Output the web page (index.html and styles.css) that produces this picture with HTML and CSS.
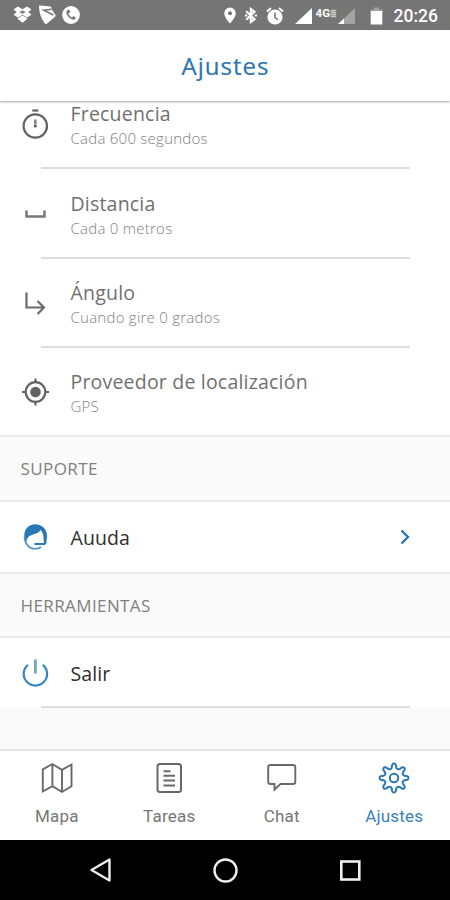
FILE: index.html
```html
<!DOCTYPE html>
<html lang="es">

<head>
    <meta charset="UTF-8">
    <meta name="viewport" content="width=device-width, initial-scale=1.0">
    <title>Ajustes</title>
    <link rel="stylesheet" href="styles.css">
</head>

<body>
    <div class="status-bar">
        <div class="status-left">
            <svg width="19" height="18" viewBox="0 0 19 18" fill="#fff">
                <path d="M5 .5l4.500 2.800L14 .5l4.500 3-3.200 2.600 3.200 2.700L14 11.500 9.500 8.700 5 11.500.5 8.800l3.200-2.700L.5 3.500z" />
                <path d="M9.500 4.200L6.400 6.100l3.100 1.900 3.100-1.900z" fill="#858585" />
                <path d="M4.300 12.600l5.200-3.200 5.200 3.200-5.200 4.200z" />
            </svg>
            <svg width="18" height="20" viewBox="0 0 18 20" fill="#fff">
                <path d="M1 1.500Q.8.500 2 .5L12.500 1.500Q14 2 13.500 4L17.500 10Q18 11.200 16.800 12L8.800 18.800Q7.500 19.600 6.500 18C3 13 1.200 8 1 1.500z" />
                <path d="M13.500 4.300L5.500 5.200l10 4.800" fill="none" stroke="#757575" stroke-width="1.400" />
            </svg>
            <svg width="18" height="18" viewBox="0 0 18 18">
                <circle cx="9" cy="9" r="8.900" fill="#fff" />
                <path d="M6.200 4.600c-1.600 1-1.300 3.300.6 5.500s4.500 3.500 6 2" fill="none" stroke="#757575" stroke-width="1.600" />
                <path d="M5.800 4.200l1.800 2.600M10.500 11l2.700 1.500" stroke="#757575" stroke-width="2.400" />
            </svg>
        </div>
        <div class="status-right">
            <svg class="pin" width="12" height="17" viewBox="0 0 12 17">
                <path d="M6 .5A5.700 5.700 0 0 0 .3 6.200C.3 10.500 6 16.500 6 16.500s5.700-6 5.700-10.300A5.700 5.700 0 0 0 6 .5z" fill="#fff" />
                <circle cx="6" cy="6.200" r="2" fill="#757575" />
            </svg>
            <svg class="bluetooth" width="12" height="17" viewBox="0 0 12 17" fill="none" stroke="#fff" stroke-width="2.100">
                <path d="M1.200 4.300l8.300 7.900L5.800 15V2l3.700 2.800-8.300 7.900M0 8.500h2.300M9.700 8.500H12" />
            </svg>
            <svg class="alarm" width="18" height="18" viewBox="0 0 18 18">
                <circle cx="9" cy="10" r="7.600" fill="#fff" />
                <path d="M1 4.500L5 1M17 4.500L13 1" stroke="#fff" stroke-width="2" />
                <path d="M9 5.500v5l3 2.200" fill="none" stroke="#757575" stroke-width="1.500" />
            </svg>
            <svg class="signal" width="17" height="16" viewBox="0 0 17 16">
                <path d="M0 16L17 0v16z" fill="#fff" />
            </svg>
            <span class="network">4G<span>≣</span></span>
            <svg class="signal-two" width="17" height="16" viewBox="0 0 17 16">
                <path d="M0 16L17 0v16z" fill="#a3a3a3" />
                <path d="M0 16l6-5.600V16z" fill="#fff" />
            </svg>
            <svg class="battery" width="13" height="18" viewBox="0 0 13 18">
                <path d="M4 .5h5v2h3.300v3H.7v-3H4z" fill="#a3a3a3" />
                <path d="M.7 4h11.600v13.500H.7z" fill="#fff" />
            </svg>
            <span class="clock">20:26</span>
        </div>
    </div>

    <header>
        <h1>Ajustes</h1>
    </header>

    <main>
        <div class="row first">
            <svg class="icon" width="30" height="32" viewBox="0 0 30 32" fill="none" stroke="#626262" stroke-width="2.200">
                <circle cx="15.300" cy="18" r="11.700" />
                <path d="M12.300 2.500h6" />
                <path d="M15.300 11.500v5" stroke="#888" stroke-width="2.600" />
                <circle cx="15.300" cy="18" r="1.600" fill="#626262" stroke="none" />
            </svg>
            <div class="text">
                <div class="title">Frecuencia</div>
                <div class="subtitle">Cada 600 segundos</div>
            </div>
        </div>
        <div class="row">
            <svg class="icon" width="30" height="32" viewBox="0 0 30 32" fill="none" stroke="#777" stroke-width="2.500">
                <path d="M6.500 12.500V18.500h18V12.500" />
            </svg>
            <div class="text">
                <div class="title">Distancia</div>
                <div class="subtitle">Cada 0 metros</div>
            </div>
        </div>
        <div class="row">
            <svg class="icon" width="30" height="32" viewBox="0 0 30 32" fill="none" stroke="#6b6b6b" stroke-width="2.200">
                <path d="M6.500 5.500V20.500h17.500M17.500 14l6.500 6.500-6.500 6.500" />
            </svg>
            <div class="text">
                <div class="title">Ángulo</div>
                <div class="subtitle">Cuando gire 0 grados</div>
            </div>
        </div>
        <div class="row last">
            <svg class="icon" width="30" height="32" viewBox="0 0 30 32" fill="none" stroke="#626262" stroke-width="2.200">
                <circle cx="15.500" cy="16" r="9.800" />
                <circle cx="15.500" cy="16" r="5.300" fill="#626262" stroke="none" />
                <path d="M15.500 2.500v4M15.500 25.500v4M2 16h4M25 16h4" />
            </svg>
            <div class="text">
                <div class="title">Proveedor de localización</div>
                <div class="subtitle">GPS</div>
            </div>
        </div>

        <h2>SUPORTE</h2>
        <div class="row action help">
            <svg class="icon" width="30" height="30" viewBox="0 0 30 30">
                <path d="M5.500 19.500C2 10.500 6.500 2.500 15 2.300c7.500 0 12.800 5.500 12 13.200l-.8 5.500-2 .8-.7-5.500c0-3.500-.8-6.500-3-8.300-1.200 2.800-5 3.700-8 4.700C8.500 14 6.500 16 6.500 19.500z" fill="#2778b5" />
                <path d="M4.500 14.500c0 7 4.500 12.500 11 12.300 2.200 0 4.200-.8 5.500-2" fill="none" stroke="#4c92c6" stroke-width="1.600" />
                <path d="M14.500 22h8.500c1.500 0 2.300-.6 2.500-2" fill="none" stroke="#2778b5" stroke-width="2" />
            </svg>
            <div class="label">Auuda</div>
            <svg class="chevron" width="12" height="16" viewBox="0 0 12 16" fill="none" stroke="#2a79b2" stroke-width="2.400">
                <path d="M3.500 1.500L10 8 3.500 14.500" />
            </svg>
        </div>

        <h2>HERRAMIENTAS</h2>
        <div class="row action exit">
            <svg class="icon" width="30" height="30" viewBox="0 0 30 30" fill="none" stroke="#3585bf" stroke-width="2.200">
                <path d="M8 6.800a11.700 11.700 0 1 0 14.800 0" />
                <path d="M15.400 1.500v14" stroke="#6fa6d0" stroke-width="2.800" />
            </svg>
            <div class="label">Salir</div>
        </div>
    </main>

    <nav class="tabs">
        <a class="tab">
            <svg width="32" height="32" viewBox="0 0 32 32" fill="none" stroke="#686868" stroke-width="1.900">
                <path d="M1.800 7.300l9.600-5.300 9.600 5.800L30.500 2.500v21.800L21 30l-9.600-5.800L1.800 29.500zM11.400 2v22.200M21 7.800V30" />
            </svg>
            <span>Mapa</span>
        </a>
        <a class="tab">
            <svg width="32" height="32" viewBox="0 0 32 32" fill="none" stroke="#686868" stroke-width="2">
                <rect x="4.500" y="2" width="23.500" height="28" rx="2.500" />
                <path d="M10.500 9.200h7M10.500 13.700h11.500M10.500 18.500h11.500M10.500 23.500h11.500" />
            </svg>
            <span>Tareas</span>
        </a>
        <a class="tab">
            <svg width="32" height="32" viewBox="0 0 32 32" fill="none" stroke="#686868" stroke-width="1.900">
                <path d="M4.500 3H27q2.300 0 2.300 2.300v14.400q0 2.300-2.300 2.300H14.500L8.500 27.500V22h-4q-2.300 0-2.300-2.300V5.300Q2.200 3 4.500 3z" />
            </svg>
            <span>Chat</span>
        </a>
        <a class="tab active">
            <svg width="32" height="32" viewBox="-16 -16 32 32" fill="none" stroke="#2778b5" stroke-width="2" stroke-linejoin="round">
                <path d="M-1.760-13.380A2 2 0 0 1 1.760-13.380L2.250-10.560A2.400 2.400 0 0 0 5.880-9.060L8.220-10.710A2 2 0 0 1 10.710-8.220L9.060-5.880A2.400 2.400 0 0 0 10.560-2.250L13.380-1.760A2 2 0 0 1 13.380 1.760L10.560 2.250A2.400 2.400 0 0 0 9.060 5.880L10.710 8.220A2 2 0 0 1 8.220 10.710L5.880 9.060A2.400 2.400 0 0 0 2.250 10.560L1.760 13.380A2 2 0 0 1-1.760 13.380L-2.250 10.560A2.400 2.400 0 0 0-5.880 9.060L-8.220 10.710A2 2 0 0 1-10.710 8.220L-9.060 5.880A2.400 2.400 0 0 0-10.560 2.250L-13.380 1.760A2 2 0 0 1-13.380-1.760L-10.560-2.250A2.400 2.400 0 0 0-9.060-5.880L-10.710-8.220A2 2 0 0 1-8.220-10.710L-5.880-9.060A2.400 2.400 0 0 0-2.250-10.560z" />
                <circle r="4.200" />
            </svg>
            <span>Ajustes</span>
        </a>
    </nav>

    <div class="system-nav">
        <svg width="26" height="28" viewBox="0 0 26 28" fill="none" stroke="#eee" stroke-width="2.400" stroke-linejoin="round">
            <path d="M22.500 3.500v21L4.500 14z" />
        </svg>
        <svg width="26" height="28" viewBox="0 0 26 28" fill="none" stroke="#eee" stroke-width="2.400">
            <circle cx="13.500" cy="14.500" r="11" />
        </svg>
        <svg width="26" height="28" viewBox="0 0 26 28" fill="none" stroke="#eee" stroke-width="2.600">
            <rect x="4.300" y="5.500" width="18" height="18" />
        </svg>
    </div>
</body>

</html>
```
FILE: styles.css
```css
* {
    box-sizing: border-box;
}

body {
    margin: 0;
    height: 900px;
    display: flex;
    flex-direction: column;
    overflow: hidden;
    font-family: "Open Sans", sans-serif;
    background-color: #fafafa;
    color: #707070;
}

svg {
    display: block;
    flex: none;
}

.status-bar {
    height: 30px;
    flex: none;
    display: flex;
    justify-content: space-between;
    padding: 0 12px 0 13px;
    background-color: #757575;
    color: #fff;
}

.status-left,
.status-right {
    display: flex;
    align-items: center;
}

.status-left {
    gap: 6px;
}

.status-right {
    padding-top: 1px;
}

.bluetooth {
    margin-left: 9px;
}

.alarm {
    margin-left: 9px;
}

.signal {
    margin-left: 11px;
}

.network {
    width: 21px;
    margin: -6px 0 0 4px;
    font: bold 11.500px Roboto, sans-serif;
    white-space: nowrap;
}

.network span {
    font-size: 8px;
    color: #c8c8c8;
}

.signal-two {
    margin-left: 1px;
}

.battery {
    margin-left: 15px;
}

.clock {
    margin: 1px 0 0 11px;
    font: 500 17.500px Roboto, sans-serif;
}

header {
    height: 71px;
    flex: none;
    z-index: 1;
    background-color: #fff;
    box-shadow: 0 1px 2px rgba(0, 0, 0, 0.35);
}

h1 {
    margin: 0;
    padding-left: 1px;
    line-height: 72px;
    text-align: center;
    font-size: 24px;
    font-weight: 400;
    letter-spacing: 1px;
    color: #2a75b0;
    -webkit-text-stroke: 0.2px #2a75b0;
}

main {
    flex: 1;
}

.row {
    height: 89.500px;
    display: flex;
    align-items: center;
    padding: 0 40px 0 20px;
    background: linear-gradient(#dedede, #dedede) 41px 100% / 369px 2px no-repeat #fff;
}

.icon {
    margin-right: 20.500px;
}

.text {
    padding-top: 2px;
}

.first {
    height: 68px;
    padding-bottom: 22px;
}

.last {
    height: 87px;
    background: #fff;
}

.title {
    font-size: 19.500px;
    line-height: 26px;
    letter-spacing: 0.2px;
}

.subtitle {
    font-size: 15px;
    line-height: 22px;
    font-weight: 300;
    letter-spacing: 0.25px;
    color: #808080;
}

h2 {
    height: 66.500px;
    margin: 0;
    padding-left: 20.500px;
    border: 2px solid #e9e9e9;
    border-width: 2px 0;
    line-height: 64px;
    font-size: 17px;
    font-weight: 400;
    letter-spacing: 0.4px;
    color: #808080;
}

.action {
    height: 70px;
    background: #fff;
}

.label {
    flex: 1;
    padding-top: 1px;
    font-size: 19.500px;
    letter-spacing: 0.1px;
    color: #2e2e2e;
}

.exit {
    background: linear-gradient(#dedede, #dedede) 41px 100% / 369px 2px no-repeat #fff;
}

.tabs {
    height: 91px;
    flex: none;
    display: flex;
    border-top: 2px solid #e4e4e4;
    background-color: #fff;
}

.tab {
    flex: 1;
    display: flex;
    flex-direction: column;
    align-items: center;
    padding: 11px 0 0 1px;
    font: 17px/20px Roboto, sans-serif;
    letter-spacing: 0.2px;
    color: #767676;
}

.tab span {
    margin-top: 12px;
}

.active {
    color: #3a7fc0;
}

.system-nav {
    height: 60px;
    flex: none;
    display: flex;
    justify-content: space-between;
    align-items: center;
    padding: 0 87px;
    background-color: #000;
}
```
